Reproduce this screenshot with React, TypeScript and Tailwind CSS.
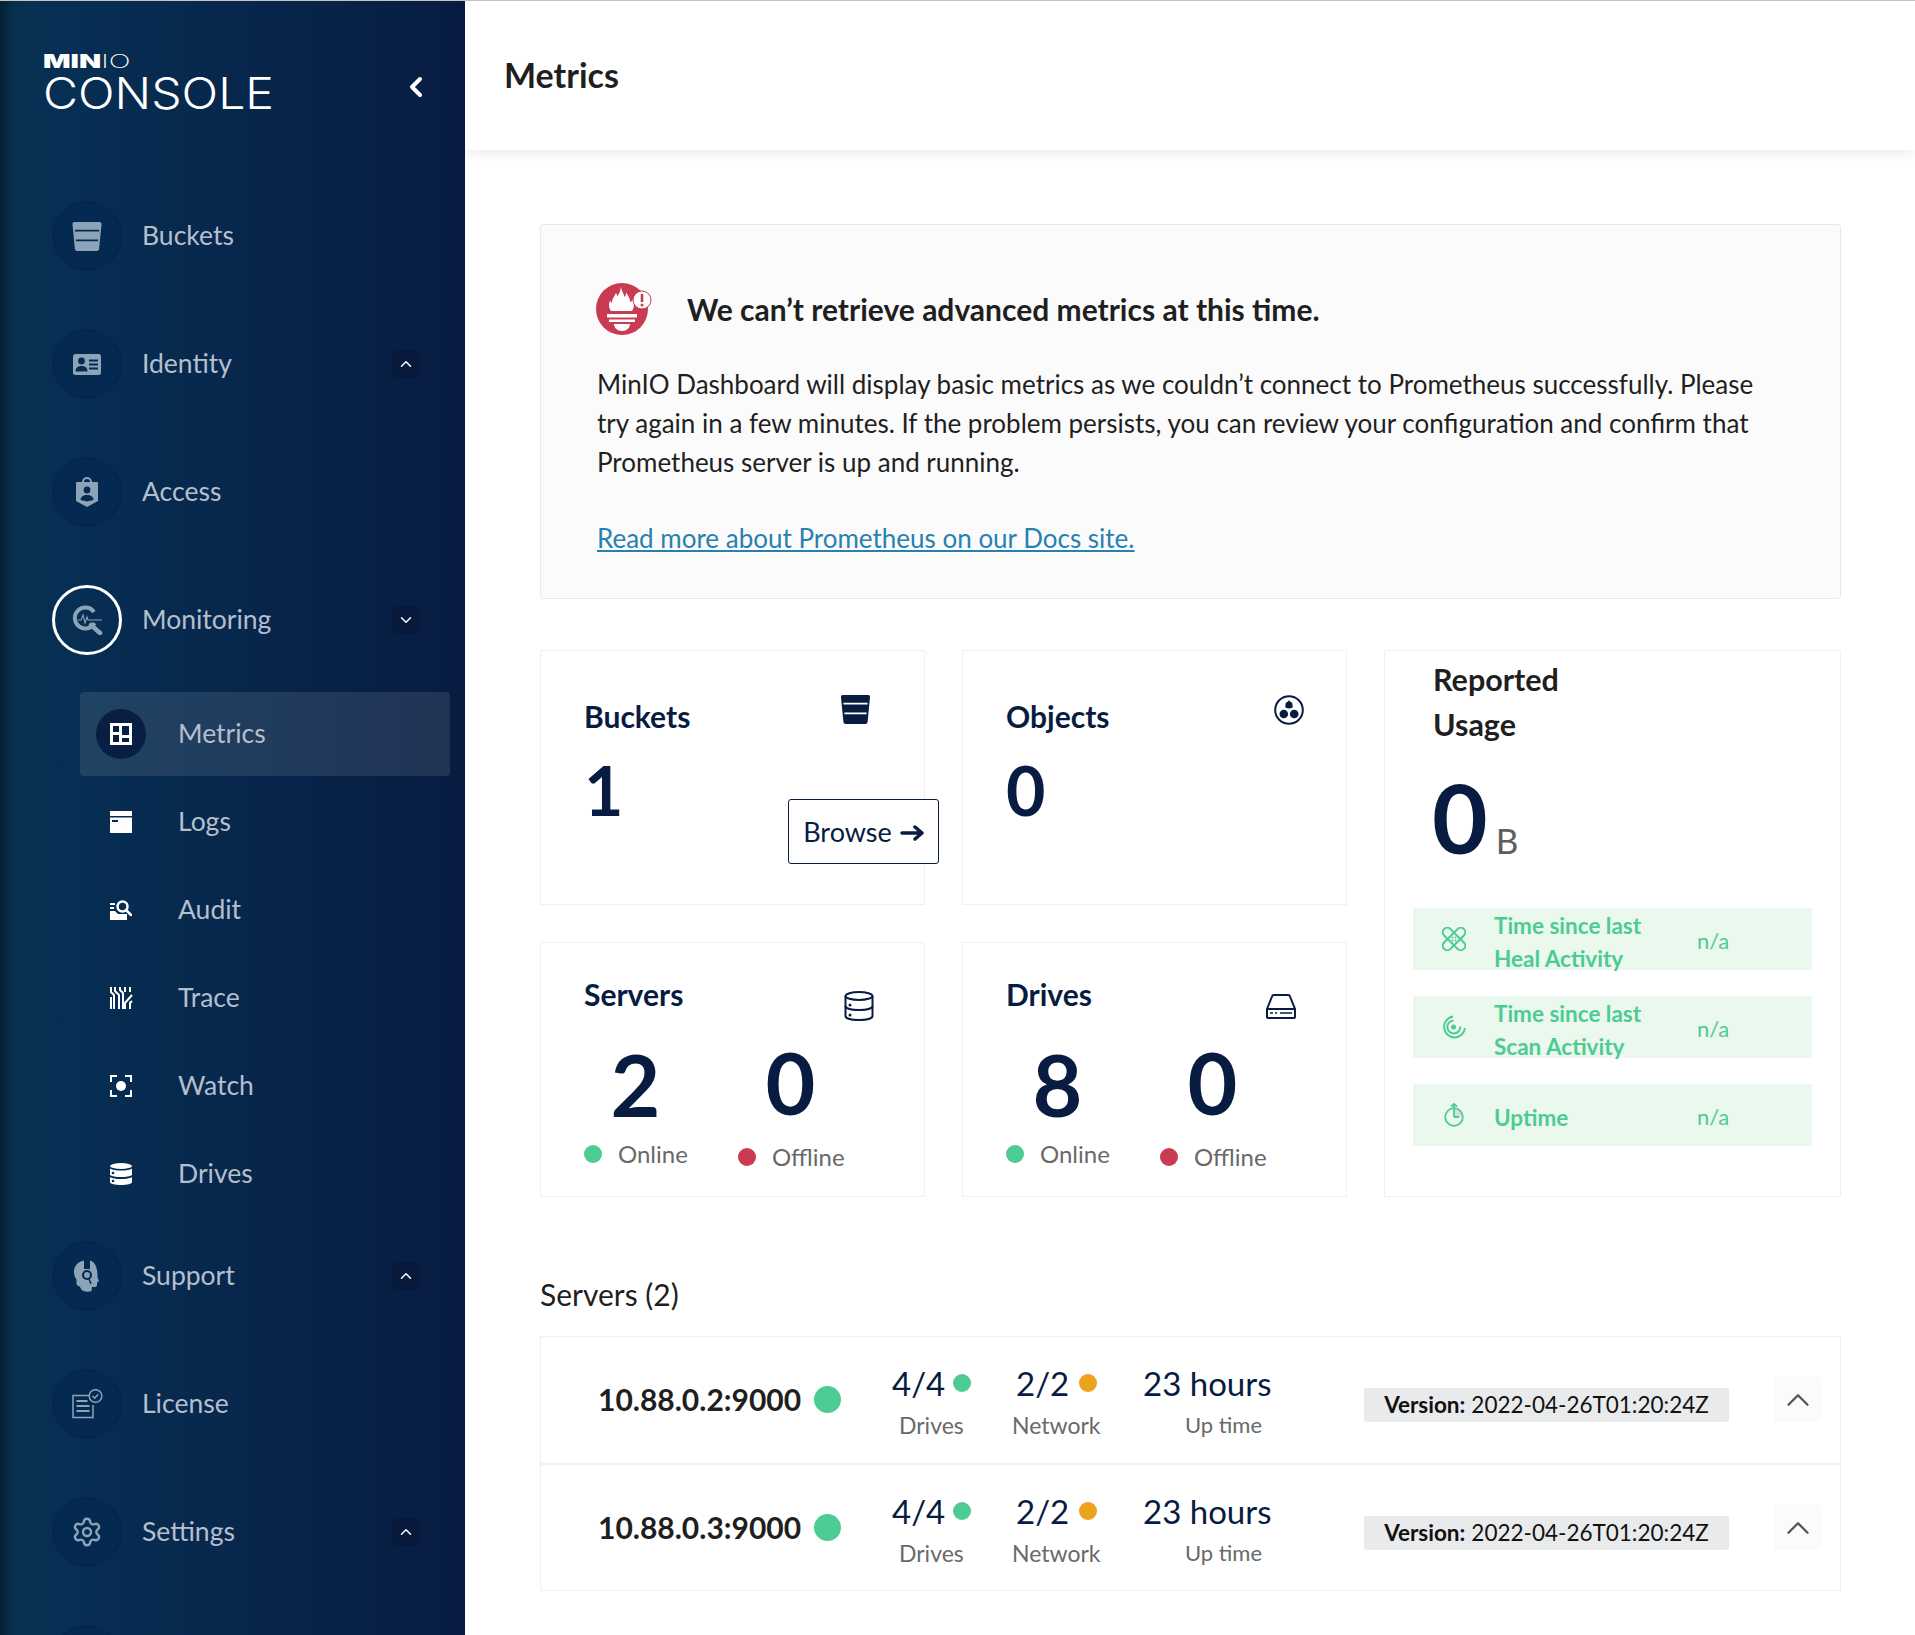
import React from "react";
import { ChevronDown, ChevronLeft, ChevronUp, Settings } from "lucide-react";

type IconProps = { className?: string };

const BucketIcon = ({ className, slot = "#fff" }: IconProps & { slot?: string }) => (
  <svg viewBox="0 0 30 30" className={className}>
    <path d="M2 0h26a2 2 0 0 1 2 2.200l-2.500 25.800a2.200 2.200 0 0 1-2.200 2H4.700a2.200 2.200 0 0 1-2.200-2L0 2.200A2 2 0 0 1 2 0Z" fill="currentColor" />
    <path d="M2.500 9h25M3.500 19h23" stroke={slot} strokeWidth="1.800" />
  </svg>
);

const IdentityIcon = ({ className }: IconProps) => (
  <svg viewBox="0 0 28 21" className={className}>
    <rect width="28" height="21" rx="2.500" fill="currentColor" />
    <circle cx="8.500" cy="7" r="3.400" fill="#072a50" />
    <path d="M2.500 17.500c0-4 2.500-5.500 6-5.500s6 1.500 6 5.500Z" fill="#072a50" />
    <path d="M16 6.500h9M16 10.500h9M16 14.500h9" stroke="#072a50" strokeWidth="1.800" />
  </svg>
);

const AccessIcon = ({ className }: IconProps) => (
  <svg viewBox="0 0 22 30" className={className}>
    <path d="M7 6V5a4 4 0 0 1 8 0v1" fill="none" stroke="currentColor" strokeWidth="2" />
    <path d="M1 5h20a1 1 0 0 1 1 1v18l-11 6-11-6V6a1 1 0 0 1 1-1Z" fill="currentColor" />
    <circle cx="11" cy="13" r="3.400" fill="#072a50" />
    <path d="M4.500 23c0-3.500 3-5 6.500-5s6.500 1.500 6.500 5l-6.500 1.500Z" fill="#072a50" />
  </svg>
);

const MonitoringIcon = ({ className }: IconProps) => (
  <svg viewBox="0 0 32 30" className={className} fill="none">
    <path d="M23 7a10.500 10.500 0 1 0 .6 11" stroke="currentColor" strokeWidth="4" />
    <path d="M20 20l9 8" stroke="currentColor" strokeWidth="4.500" strokeLinecap="round" />
    <path d="M7 15h3l2-5 2 8 2-6 1 3h14" stroke="currentColor" strokeWidth="1.100" />
  </svg>
);

const SupportIcon = ({ className }: IconProps) => (
  <svg viewBox="0 0 26 32" className={className}>
    <path
      d="M10 .5C4 1.500 0 6 0 12c0 3 1 5.500 2.500 7.500V24c0 1 2 2 3 2.500 1 .5 1.500 3.500 4 4.500 3 1 6 1 8 0l.5-4h3c2 0 2-2 2-3l.5-2 1.500-.8-1.500-4C23.800 6 20 1.500 16 .5V9h-6Z"
      fill="currentColor"
    />
    <circle cx="13" cy="15" r="4" fill="none" stroke="#072a50" strokeWidth="2.200" />
    <path d="M15 19l2 5" stroke="#072a50" strokeWidth="1.500" />
  </svg>
);

const LicenseIcon = ({ className }: IconProps) => (
  <svg viewBox="0 0 31 30" className={className} fill="none" stroke="currentColor" strokeWidth="1.500">
    <path d="M17 6.500H1v22h20V16" />
    <path d="M4.500 12h11M4.500 17h13M4.500 22h13" strokeWidth="2" />
    <circle cx="23.500" cy="7" r="6.300" />
    <path d="M20.500 7l2.200 2.200 3.500-4" />
  </svg>
);

const MetricsIcon = ({ className }: IconProps) => (
  <svg viewBox="0 0 22 22" className={className}>
    <path
      fillRule="evenodd"
      fill="currentColor"
      d="M0 0h22v22H0ZM3 3v6h6V3Zm9 0v9h7V3Zm-9 9v7h6v-7Zm9 3v4h7v-4Z"
    />
  </svg>
);

const LogsIcon = ({ className }: IconProps) => (
  <svg viewBox="0 0 22 22" className={className}>
    <path d="M0 0h22v5H0Z" fill="currentColor" />
    <path d="M0 6.500h22V22H0Z" fill="currentColor" />
    <path d="M2 9h6v2H2Z" fill="#072a50" />
  </svg>
);

const AuditIcon = ({ className }: IconProps) => (
  <svg viewBox="0 0 22 20" className={className}>
    <path d="M0 3h5v2H0ZM0 7h4v2H0ZM0 11h5l3 3h9v6H0Z" fill="currentColor" />
    <circle cx="12.500" cy="6.500" r="5" fill="none" stroke="currentColor" strokeWidth="2.500" />
    <path d="M16 10l5 5" stroke="currentColor" strokeWidth="2.500" strokeLinecap="round" />
  </svg>
);

const TraceIcon = ({ className }: IconProps) => (
  <svg viewBox="0 0 23 22" className={className} fill="none" stroke="currentColor" strokeWidth="2">
    <path d="M1 0v5l3 3v14M1 10v12M5 0v4l4 4v14M10 0v3l3 3v16M15 0v5M20 0v5M22 8l-7 8v6M22 14l-2 2v6" />
  </svg>
);

const WatchIcon = ({ className }: IconProps) => (
  <svg viewBox="0 0 22 22" className={className} fill="none" stroke="currentColor" strokeWidth="2">
    <path d="M1 7V1h6M15 1h6v6M21 15v6h-6M7 21H1v-6" />
    <circle cx="11" cy="11" r="5" fill="currentColor" stroke="none" />
  </svg>
);

const DrivesIcon = ({ className }: IconProps) => (
  <svg viewBox="0 0 22 22" className={className} fill="currentColor">
    <ellipse cx="11" cy="3" rx="11" ry="3" />
    <path d="M0 5.500c2 1.500 6 2 11 2s9-.5 11-2V12c-2 1.500-6 2-11 2s-9-.5-11-2Z" />
    <path d="M0 14c2 1.500 6 2 11 2s9-.5 11-2v5c0 2-5 3-11 3S0 21 0 19Z" />
    <circle cx="3" cy="10" r="1.300" fill="#072a50" />
    <circle cx="3" cy="18" r="1.300" fill="#072a50" />
  </svg>
);

const ObjectsIcon = ({ className }: IconProps) => (
  <svg viewBox="0 0 30 30" className={className}>
    <circle cx="15" cy="15" r="13.800" fill="none" stroke="currentColor" strokeWidth="2" />
    <path d="M15 5l4 7.500h-8Z" fill="currentColor" />
    <circle cx="15" cy="10" r="3.600" fill="currentColor" />
    <circle cx="9.800" cy="19" r="4.300" fill="currentColor" />
    <circle cx="20.200" cy="19" r="4.300" fill="currentColor" />
  </svg>
);

const ServersIcon = ({ className }: IconProps) => (
  <svg viewBox="0 0 30 30" className={className} fill="none" stroke="currentColor" strokeWidth="2">
    <ellipse cx="15" cy="5" rx="13.500" ry="4" />
    <path d="M1.500 5v20c0 2.500 6 4 13.500 4s13.500-1.500 13.500-4V5" />
    <path d="M1.500 15c0 2.500 6 4 13.500 4s13.500-1.500 13.500-4" />
    <circle cx="6" cy="14" r="1.500" fill="currentColor" stroke="none" />
    <circle cx="6" cy="24" r="1.500" fill="currentColor" stroke="none" />
  </svg>
);

const DiskIcon = ({ className }: IconProps) => (
  <svg viewBox="0 0 30 25" className={className} fill="none" stroke="currentColor" strokeWidth="2">
    <path d="M1 15 6 2.500a2 2 0 0 1 2-1.500h14a2 2 0 0 1 2 1.500L29 15v8a1 1 0 0 1-1 1H2a1 1 0 0 1-1-1Z" />
    <path d="M1 15h28" />
    <path d="M4 19h3M9 19h2M14 19h12" strokeWidth="1.600" />
  </svg>
);

const HealIcon = ({ className }: IconProps) => (
  <svg viewBox="0 0 24 24" className={className} fill="none" stroke="currentColor" strokeWidth="2">
    <rect x="-2" y="7.500" width="28" height="9" rx="4.500" transform="rotate(45 12 12)" />
    <rect x="-2" y="7.500" width="28" height="9" rx="4.500" transform="rotate(-45 12 12)" />
    <path d="M10.500 10.500h.01M13.500 10.500h.01M10.500 13.500h.01M13.500 13.500h.01" strokeLinecap="round" />
  </svg>
);

const ScanIcon = ({ className }: IconProps) => (
  <svg viewBox="0 0 24 24" className={className} fill="none" stroke="currentColor" strokeWidth="2">
    <path d="M11 1.500A10.500 10.500 0 1 0 23 13" />
    <path d="M11.500 5.500a6.500 6.500 0 1 0 6.800 6" />
    <circle cx="11.500" cy="12" r="2.500" fill="currentColor" stroke="none" />
  </svg>
);

const UptimeIcon = ({ className }: IconProps) => (
  <svg viewBox="0 0 20 24" className={className} fill="none" stroke="currentColor" strokeWidth="1.800">
    <path d="M10 14V5.200a8.800 8.800 0 0 1 8.800 8.800Z" fill="#dcdcdc" stroke="none" />
    <circle cx="10" cy="14" r="8.800" />
    <path d="M10 14V1M7 3.500 10 1l3 2.500M10 14h5" />
  </svg>
);

const PrometheusIcon = ({ className }: IconProps) => (
  <svg viewBox="0 0 56 52" className={className}>
    <circle cx="26" cy="26" r="26" fill="#c83b51" />
    <path
      d="M25 4c1 5 3 7 3.500 10 1-1 1.500-2.500 1.500-4.500 2.500 3.500 4 6.500 4.500 10 1-.8 1.800-2 2-3 2.200 3.500 1.800 8-.5 11.500H15c-2.500-3.500-2.500-7.500-.8-10.500.3 1 .8 2 1.600 2.500.2-4.500 3-7 4.200-10 .8 1 1.200 2.200 1.200 3.500C23 11 24.500 8 25 4Z"
      fill="#fff"
    />
    <path d="M11 31h30v3.500H11ZM13 36.500h26v2.500H13Z" fill="#fff" />
    <path d="M18 41h16c0 3.500-3 7-8 7s-8-3.500-8-7Z" fill="#fff" />
    <circle cx="46" cy="17" r="9" fill="#fff" stroke="#c83b51" strokeWidth="1" />
    <path d="M46 11v8" stroke="#c83b51" strokeWidth="2.600" />
    <circle cx="46" cy="22" r="1.500" fill="#c83b51" />
  </svg>
);

const NavItem = ({
  label,
  icon,
  chevron,
  active,
}: {
  label?: string;
  icon: React.ReactNode;
  chevron?: "up" | "down";
  active?: boolean;
}) => (
  <div className="flex h-[128px] shrink-0 items-center pl-[52px] pr-[45px]">
    <div
      className={
        active
          ? "flex h-[70px] w-[70px] shrink-0 items-center justify-center rounded-full border-[3px] border-white text-[#8da3b8]"
          : "flex h-[70px] w-[70px] shrink-0 items-center justify-center rounded-full border-[2px] border-[#06264a] bg-[#042a52] text-[#8da3b8]"
      }
    >
      {icon}
    </div>
    {label && <span className="ml-[20px] text-[26.500px] text-[#b5bfcc]">{label}</span>}
    {chevron && (
      <span className="ml-auto flex h-[28px] w-[28px] items-center justify-center rounded-[4px] bg-[#081a3c] text-white">
        {chevron === "up" ? <ChevronUp size={18} /> : <ChevronDown size={18} />}
      </span>
    )}
  </div>
);

const SubItem = ({ label, icon, active }: { label: string; icon: React.ReactNode; active?: boolean }) => (
  <div
    className={
      active
        ? "ml-[80px] flex h-[84px] w-[370px] items-center rounded-[4px] bg-white/10 pl-[16px]"
        : "ml-[80px] flex h-[84px] w-[370px] items-center pl-[16px]"
    }
  >
    <span
      className={
        active
          ? "flex h-[50px] w-[50px] shrink-0 items-center justify-center rounded-full bg-[#081e42] text-white"
          : "flex h-[50px] w-[50px] shrink-0 items-center justify-center text-white"
      }
    >
      {icon}
    </span>
    <span className="ml-[32px] text-[26.500px] text-[#b5bfcc]">{label}</span>
  </div>
);

const Sidebar = () => (
  <aside className="flex h-full w-[465px] shrink-0 flex-col overflow-hidden bg-[linear-gradient(90deg,#03202f_0%,#07304f_3%,#072f54_12%,#081c42_100%)]">
    <div className="flex h-[171px] shrink-0 items-start pl-[43px] pr-[33px] pt-[53px]">
      <div className="flex flex-col">
        <div className="flex h-[16px] origin-left scale-x-[1.52] items-center font-['Inter'] text-[19px] leading-[16px] text-white">
          <span className="font-black">MIN</span>
          <span className="font-extralight">IO</span>
        </div>
        <div className="mt-[5px] origin-left scale-x-[1.12] font-['Inter'] text-[43px] font-light leading-[36px] text-white">CONSOLE</div>
      </div>
      <ChevronLeft size={32} strokeWidth={3} className="ml-auto mt-[17px] text-white" />
    </div>
    <NavItem label="Buckets" icon={<BucketIcon slot="#072a50" className="h-[29px] w-[30px]" />} />
    <NavItem label="Identity" chevron="up" icon={<IdentityIcon className="h-[21px] w-[28px]" />} />
    <NavItem label="Access" icon={<AccessIcon className="h-[30px] w-[22px]" />} />
    <NavItem label="Monitoring" chevron="down" active icon={<MonitoringIcon className="h-[30px] w-[32px]" />} />
    <div className="mt-[8px] -mb-[4px] flex flex-col gap-[4px]">
      <SubItem label="Metrics" active icon={<MetricsIcon className="h-[22px] w-[22px]" />} />
      <SubItem label="Logs" icon={<LogsIcon className="h-[22px] w-[22px]" />} />
      <SubItem label="Audit" icon={<AuditIcon className="h-[20px] w-[22px]" />} />
      <SubItem label="Trace" icon={<TraceIcon className="h-[22px] w-[23px]" />} />
      <SubItem label="Watch" icon={<WatchIcon className="h-[22px] w-[22px]" />} />
      <SubItem label="Drives" icon={<DrivesIcon className="h-[22px] w-[22px]" />} />
    </div>
    <NavItem label="Support" chevron="up" icon={<SupportIcon className="h-[32px] w-[26px]" />} />
    <NavItem label="License" icon={<LicenseIcon className="h-[30px] w-[31px]" />} />
    <NavItem label="Settings" chevron="up" icon={<Settings size={32} strokeWidth={1.8} />} />
    <NavItem icon={null} />
  </aside>
);

const StatCard = ({
  title,
  value,
  icon,
  action,
  iconRight,
}: {
  title: string;
  value: string;
  icon: React.ReactNode;
  action?: React.ReactNode;
  iconRight?: boolean;
}) => (
  <div
    className={
      iconRight
        ? "relative h-[255px] border border-[#f0f0f0] pl-[43px] pr-[42px] pt-[45px] text-[#081c42]"
        : "relative h-[255px] border border-[#f0f0f0] pl-[43px] pr-[54px] pt-[45px] text-[#081c42]"
    }
  >
    <div className="flex items-start justify-between">
      <span className="text-[30px] font-bold leading-[40px]">{title}</span>
      <span className="-mt-[1px]">{icon}</span>
    </div>
    <div className="mt-[14px] text-[68px] font-bold leading-[80px]">{value}</div>
    {action}
  </div>
);

const HealthCard = ({ title, online, icon }: { title: string; online: string; icon: React.ReactNode }) => (
  <div className="h-[255px] border border-[#f0f0f0] pl-[43px] pr-[50px] pt-[31px] text-[#081c42]">
    <div className="flex h-[46px] items-start justify-between">
      <span className="text-[30px] font-bold leading-[40px]">{title}</span>
      <span className="mt-[17px] flex h-[30px] items-center">{icon}</span>
    </div>
    <div className="mt-[14px] grid grid-cols-[154px_154px]">
      <div className="w-[103px]">
        <div className="text-center text-[86px] font-bold leading-[100px]">{online}</div>
        <div className="mt-[5px] flex items-center gap-[16px]">
          <span className="h-[18px] w-[18px] shrink-0 rounded-full bg-[#4ccb92]" />
          <span className="text-[24px] leading-[30px] text-[#696969]">Online</span>
        </div>
      </div>
      <div className="-mt-[2px] w-[105px]">
        <div className="text-center text-[86px] font-bold leading-[100px]">0</div>
        <div className="mt-[10px] flex items-center gap-[16px] whitespace-nowrap">
          <span className="h-[18px] w-[18px] shrink-0 rounded-full bg-[#c83b51]" />
          <span className="text-[24px] leading-[30px] text-[#696969]">Offline</span>
        </div>
      </div>
    </div>
  </div>
);

const UsageRow = ({ label, icon }: { label: string[]; icon: React.ReactNode }) => (
  <div className="flex h-[62px] items-center bg-[#ebf8ee] text-[#4ccb92]">
    <span className="flex w-[81px] shrink-0 justify-center">{icon}</span>
    <div className="mt-[5px] w-[203px] shrink-0 text-[22.500px] font-bold leading-[33px]">
      {label.map((l) => (
        <div key={l}>{l}</div>
      ))}
    </div>
    <span className="mt-[2px] text-[22px]">n/a</span>
  </div>
);

const ServerRow = ({ ip, last }: { ip: string; last?: boolean }) => (
  <div className={last ? "flex h-[125px] items-start" : "flex h-[128px] items-start border-b-2 border-[#f0f0f0]"}>
    <div className="ml-[57px] flex w-[294px] items-center pt-[42px]">
      <span className="w-[216px] text-[30px] font-bold leading-[40px] text-[#1f1f1f]">{ip}</span>
      <span className="h-[27px] w-[27px] shrink-0 rounded-full bg-[#4ccb92]" />
    </div>
    <div className="w-[120px] pt-[24px]">
      <div className="flex items-center text-[33px] leading-[44px] text-[#081c42]">
        4/4<span className="ml-[8px] h-[18px] w-[18px] shrink-0 rounded-full bg-[#4ccb92]" />
      </div>
      <div className="ml-[7px] mt-[2px] text-[23px] leading-[36px] text-[#696969]">Drives</div>
    </div>
    <div className="w-[131px] pt-[24px]">
      <div className="ml-[4px] flex items-center text-[33px] leading-[44px] text-[#081c42]">
        2/2<span className="ml-[10px] h-[18px] w-[18px] shrink-0 rounded-full bg-[#e9a31c]" />
      </div>
      <div className="mt-[2px] text-[23px] leading-[36px] text-[#696969]">Network</div>
    </div>
    <div className="w-[221px] pt-[24px]">
      <div className="text-[33px] leading-[44px] text-[#081c42]">23 hours</div>
      <div className="ml-[42px] mt-[2px] text-[22px] leading-[36px] text-[#696969]">Up time</div>
    </div>
    <div className="mt-[51px] flex h-[34px] w-[365px] items-center justify-center rounded-[3px] bg-[#e9eaeb] text-[22.500px] text-[#111]">
      <span className="font-bold">Version:</span>
      <span className="ml-[6px]">2022-04-26T01:20:24Z</span>
    </div>
    <div className="ml-[45px] mt-[40px] flex h-[45px] w-[47px] items-center justify-center rounded-[3px] bg-[#fbfbfb] text-[#555]">
      <ChevronUp size={38} strokeWidth={1.5} />
    </div>
  </div>
);

export default function App() {
  return (
    <div className="flex h-[1635px] w-full overflow-hidden border-t border-[#c4c4c4] bg-white font-['Lato',sans-serif] text-[#1f1f1f]">
      <Sidebar />
      <div className="flex min-w-0 flex-1 flex-col">
        <header className="flex h-[149px] shrink-0 items-start bg-white pl-[39px] pt-[49px] shadow-[0_3px_12px_rgba(0,0,0,0.08)]">
          <h1 className="text-[34px] font-bold leading-[50px] text-[#1f1f1f]">Metrics</h1>
        </header>
        <main className="pl-[75px] pr-[74px] pt-[74px]">
          <section className="h-[375px] rounded-[3px] border border-[#e8e8e8] bg-[#fbfbfb] pl-[56px] pr-[60px] pt-[57px]">
            <div className="flex h-[54px] items-center">
              <PrometheusIcon className="-ml-[1px] h-[52px] w-[56px]" />
              <h2 className="ml-[35px] text-[30px] font-bold text-[#1f1f1f]">We can’t retrieve advanced metrics at this time.</h2>
            </div>
            <p className="mt-[29px] text-[26px] leading-[39px] text-[#1f1f1f]">
              MinIO Dashboard will display basic metrics as we couldn’t connect to Prometheus successfully. Please
              <br />
              try again in a few minutes. If the problem persists, you can review your configuration and confirm that
              <br />
              Prometheus server is up and running.
            </p>
            <a className="mt-[37px] block text-[26px] leading-[39px] text-[#2781b0] underline">Read more about Prometheus on our Docs site.</a>
          </section>

          <section className="mt-[51px] grid grid-cols-[385px_385px_457px] gap-[37px]">
            <StatCard
              title="Buckets"
              value="1"
              icon={<BucketIcon className="h-[29px] w-[29px]" />}
              action={
                <button className="absolute left-[247px] top-[148px] flex h-[65px] w-[151px] items-center justify-center gap-[8px] rounded-[3px] border border-[#081c42] bg-white pt-[2px] text-[27px] text-[#081c42]">
                  Browse
                  <svg viewBox="0 0 24 16" className="h-[16px] w-[24px]" fill="none" stroke="currentColor" strokeWidth="3.500" strokeLinecap="round" strokeLinejoin="round">
                    <path d="M2 8h20M15 2l7 6-7 6" />
                  </svg>
                </button>
              }
            />
            <StatCard title="Objects" value="0" iconRight icon={<ObjectsIcon className="h-[30px] w-[30px]" />} />
            <div className="row-span-2 border border-[#f0f0f0] pt-[6px]">
              <div className="ml-[48px] text-[30.500px] font-bold leading-[45px] text-[#1f1f1f]">
                Reported
                <br />
                Usage
              </div>
              <div className="ml-[47px] mt-[10px] flex items-baseline">
                <span className="text-[96px] font-bold leading-[120px] text-[#081c42]">0</span>
                <span className="ml-[8px] text-[35px] text-[#5e5e5e]">B</span>
              </div>
              <div className="ml-[28px] mr-[28px] mt-[31px] flex flex-col gap-[26px]">
                <UsageRow label={["Time since last", "Heal Activity"]} icon={<HealIcon className="h-[24px] w-[24px]" />} />
                <UsageRow label={["Time since last", "Scan Activity"]} icon={<ScanIcon className="h-[24px] w-[24px]" />} />
                <UsageRow label={["Uptime"]} icon={<UptimeIcon className="h-[24px] w-[20px]" />} />
              </div>
            </div>
            <HealthCard title="Servers" online="2" icon={<ServersIcon className="h-[30px] w-[30px]" />} />
            <HealthCard title="Drives" online="8" icon={<DiskIcon className="h-[25px] w-[30px]" />} />
          </section>

          <h3 className="mt-[77px] text-[30px] leading-[40px] text-[#1f1f1f]">Servers (2)</h3>
          <section className="mt-[22px] border border-[#f0f0f0]">
            <ServerRow ip="10.88.0.2:9000" />
            <ServerRow ip="10.88.0.3:9000" last />
          </section>
        </main>
      </div>
    </div>
  );
}
